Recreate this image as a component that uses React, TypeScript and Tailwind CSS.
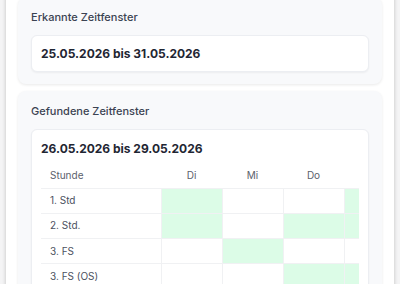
const days = ["Di", "Mi", "Do", "Fr"];

const rows: { label: string; free: boolean[] }[] = [
  { label: "1. Std", free: [true, false, false, true] },
  { label: "2. Std.", free: [true, false, true, true] },
  { label: "3. FS", free: [false, true, false, false] },
  { label: "3. FS (OS)", free: [false, false, true, true] },
  { label: "4. Std", free: [true, true, false, false] },
];

function Card({ title, children }: { title: string; children: React.ReactNode }) {
  return (
    <section className="rounded-lg bg-[#f8f9fb] px-[13px] pt-[11px] pb-[12px] shadow-[0_1px_3px_rgba(0,0,0,0.09)]">
      <h2 className="mb-[9px] text-[11px] font-medium leading-[18px] text-[#3b4352]">{title}</h2>
      {children}
    </section>
  );
}

export default function App() {
  return (
    <div
      className="min-h-screen overflow-hidden bg-[#f4f4f5] px-[6px]"
      style={{ fontFamily: "Inter, 'Noto Sans', sans-serif" }}
    >
      <div className="-mt-[3px] h-[300px] bg-white px-[12px] shadow-[0_0_4px_rgba(0,0,0,0.22)]">
        <div className="flex flex-col gap-[7px]">
          <Card title="Erkannte Zeitfenster">
            <div className="flex h-[37px] items-center rounded-md border border-[#eceef2] bg-white px-[9px] shadow-[0_1px_2px_rgba(0,0,0,0.05)]">
              <span className="text-[12px] font-bold text-[#1f2633]">25.05.2026 bis 31.05.2026</span>
            </div>
          </Card>
          <Card title="Gefundene Zeitfenster">
            <div className="rounded-md border border-[#eceef2] bg-white px-[9px] pt-[9px] pb-[10px] shadow-[0_1px_2px_rgba(0,0,0,0.05)]">
              <div className="mb-[5px] text-[12px] font-bold leading-[20px] text-[#1f2633]">26.05.2026 bis 29.05.2026</div>
              <div className="overflow-hidden">
                <table className="w-[364px] table-fixed border-collapse text-[10px]">
                  <colgroup>
                    <col className="w-[120px]" />
                    {days.map((d) => (
                      <col key={d} className="w-[61px]" />
                    ))}
                  </colgroup>
                  <thead>
                    <tr className="h-[24px] border-b border-[#eeeff1]">
                      <th className="px-[9px] text-left font-normal text-[#5b616c]">Stunde</th>
                      {days.map((d) => (
                        <th key={d} className="text-center font-normal text-[#5b616c]">{d}</th>
                      ))}
                    </tr>
                  </thead>
                  <tbody>
                    {rows.map((r) => (
                      <tr key={r.label} className="h-[25.3px]">
                        <td className="border border-l-0 border-[#f0f1f3] px-[9px] text-[#4b5160]">{r.label}</td>
                        {r.free.map((f, i) => (
                          <td key={i} className={`border border-[#f0f1f3] ${f ? "bg-[#dcfce7]" : "bg-white"}`}></td>
                        ))}
                      </tr>
                    ))}
                  </tbody>
                </table>
              </div>
            </div>
          </Card>
        </div>
      </div>
    </div>
  );
}
